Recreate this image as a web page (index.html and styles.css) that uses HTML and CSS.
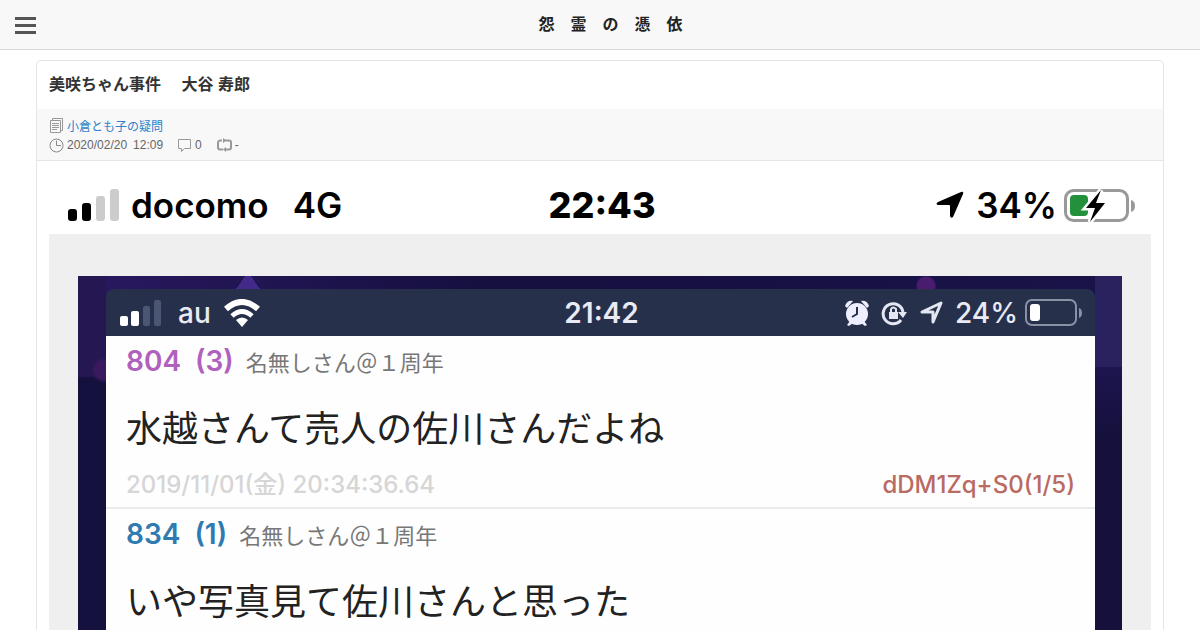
FILE: index.html
```html
<!DOCTYPE html>
<html lang="ja">

<head>
    <meta charset="UTF-8" />
    <meta name="viewport" content="width=device-width, initial-scale=1.0" />
    <title>怨　霊　の　憑　依</title>
    <link rel="stylesheet" href="styles.css">
</head>

<body>
    <header class="header">
        <button type="button" class="menu" aria-label="メニュー">
            <span></span>
            <span></span>
            <span></span>
        </button>
        <h1 class="site-title">怨　霊　の　憑　依</h1>
    </header>

    <article class="entry">
        <h2 class="entry-title">美咲ちゃん事件　 大谷 寿郎</h2>
        <div class="meta">
            <div class="meta-row">
                <svg class="icon" width="15" height="16" viewBox="0 0 15 16" fill="none" stroke="#999">
                    <path d="M3.5 3.5v-2h10v12h-2M1.500 3.500h10v12h-10z" />
                    <path d="M3 6.500h7M3 8.500h7M3 10.500h7M3 12.500h5" />
                </svg>
                <a href="#">小倉とも子の疑問</a>
            </div>
            <div class="meta-row">
                <svg class="icon" width="15" height="16" viewBox="0 0 15 16" fill="none" stroke="#888">
                    <circle cx="7.500" cy="8.500" r="6.500" />
                    <path d="M7.500 3.500v5h4.500" />
                </svg>
                <time>2020/02/20&ensp;12:09</time>
                <svg class="icon comment" width="15" height="16" viewBox="0 0 15 16" fill="none" stroke="#999">
                    <path d="M1.500 2.500h12v9h-6l-3 3v-3h-3z" />
                </svg>
                <span>0</span>
                <svg class="icon reblog" width="16" height="16" viewBox="0 0 16 16" fill="none" stroke="#999" stroke-width="2">
                    <path d="M6 3.500H4a2 2 0 0 0-2 2v5a2 2 0 0 0 2 2H7M10 12.500h3a2 2 0 0 0 2-2v-5a2 2 0 0 0-2-2H8" />
                    <path d="M7 1L10 3.500L7 6zM10 10L7 12.500L10 15z" fill="#999" stroke="none" />
                </svg>
                <span>-</span>
            </div>
        </div>

        <div class="entry-body">
            <div class="phone">
                <div class="status">
                    <div class="status-side">
                        <svg width="51" height="32" viewBox="0 0 51 32">
                            <rect x="0" y="20" width="9" height="12" rx="3" />
                            <rect x="14" y="14" width="9" height="18" rx="3" />
                            <rect x="28" y="7" width="9" height="25" rx="3" fill="#ccc" />
                            <rect x="42" y="0" width="9" height="32" rx="3" fill="#ccc" />
                        </svg>
                        <span class="carrier">docomo</span>
                        <span class="network">4G</span>
                    </div>
                    <span class="clock">22:43</span>
                    <div class="status-side right">
                        <svg width="28" height="28" viewBox="0 0 28 28">
                            <path d="M25 1Q28 0 27 3L17 26Q15 28 14 25V15Q14 14 13 14H2Q-1 13 2 11Z" />
                        </svg>
                        <span class="percent">34%</span>
                        <svg width="72" height="36" viewBox="0 0 72 36">
                            <rect x="1.500" y="3.500" width="62" height="30" rx="8" fill="none" stroke="#999" stroke-width="3" />
                            <path d="M67 13q4 1 4 6t-4 6z" fill="#999" />
                            <rect x="6" y="8" width="18" height="21" rx="4" fill="#23913b" />
                            <path d="M37 3L22 21h9l-5 14l15-19h-9z" stroke="#fff" stroke-width="5" />
                            <path d="M37 3L22 21h9l-5 14l15-19h-9z" />
                        </svg>
                    </div>
                </div>

                <div class="shot">
                    <div class="wallpaper">
                        <div class="status inner">
                            <div class="status-side">
                                <svg width="42" height="26" viewBox="0 0 42 26" fill="#fff">
                                    <rect x="0" y="16" width="8" height="10" rx="2" />
                                    <rect x="11" y="11" width="8" height="15" rx="2" />
                                    <rect x="23" y="6" width="7" height="20" rx="2" fill="#4a5673" />
                                    <rect x="34" y="0" width="7" height="26" rx="2" fill="#4a5673" />
                                </svg>
                                <span class="carrier">au</span>
                                <svg width="38" height="28" viewBox="0 0 38 28" fill="none" stroke="#fff" stroke-width="6">
                                    <path d="M3 10Q19 -4 35 10" />
                                    <path d="M9 17Q19 8 29 17" stroke-width="5" />
                                    <path d="M13 21Q19 16 25 21L19 28z" fill="#fff" stroke="none" />
                                </svg>
                            </div>
                            <span class="clock">21:42</span>
                            <div class="status-side right">
                                <svg width="24" height="26" viewBox="0 0 24 26" fill="#eef">
                                    <path d="M0 6Q2 0 8 1L2 8zM24 6Q22 0 16 1l6 7zM5 21l3 2l-4 3l-2-1zM19 21l-3 2l4 3l2-1z" />
                                    <circle cx="12" cy="14" r="11" />
                                    <path d="M12 7v7L7 17" fill="none" stroke="#26304a" stroke-width="2" />
                                </svg>
                                <svg width="26" height="26" viewBox="0 0 26 26" fill="none" stroke="#e4e6f2" stroke-width="3">
                                    <path d="M20 20A10 10 0 1 1 22 12" />
                                    <path d="M17 12h9l-4 6z" fill="#e4e6f2" stroke="none" />
                                    <path d="M8 12h9v7H8z" fill="#e4e6f2" stroke="none" />
                                    <path d="M10 13V9q2-3 5 0v4" stroke-width="2" />
                                </svg>
                                <svg width="24" height="24" viewBox="0 0 24 24" fill="none" stroke="#e4e6f2" stroke-width="3" stroke-linejoin="round">
                                    <path d="M22 2L14 21V11H3z" />
                                </svg>
                                <span class="percent">24%</span>
                                <svg width="58" height="28" viewBox="0 0 58 28">
                                    <rect x="1" y="1" width="50" height="25" rx="6" fill="none" stroke="#8b91a5" stroke-width="2" />
                                    <rect x="5" y="5" width="10" height="17" rx="3" fill="#fff" />
                                    <path d="M54 9q3 1 3 5t-3 5z" fill="#8b91a5" />
                                </svg>
                            </div>
                        </div>

                        <section class="post">
                            <div class="post-head">
                                <span class="number purple">804&ensp;(3)</span>
                                <span>名無しさん＠１周年</span>
                            </div>
                            <p class="post-text">水越さんて売人の佐川さんだよね</p>
                            <div class="post-foot">
                                <time>2019/11/01(金) 20:34:36.64</time>
                                <span class="post-id">dDM1Zq+S0(1/5)</span>
                            </div>
                        </section>
                        <section class="post">
                            <div class="post-head">
                                <span class="number blue">834&ensp;(1)</span>
                                <span>名無しさん＠１周年</span>
                            </div>
                            <p class="post-text">いや写真見て佐川さんと思った</p>
                        </section>
                    </div>
                </div>
            </div>
        </div>
    </article>
</body>

</html>
```
FILE: styles.css
```css
* {
    box-sizing: border-box;
}

body {
    margin: 0;
    background-color: white;
    color: #333;
    font-family: "Liberation Sans", "Noto Sans CJK JP", sans-serif;
    font-size: 12px;
}

.header {
    display: flex;
    align-items: center;
    height: 50px;
    padding: 0 15px;
    background-color: #f8f8f8;
    border-bottom: 1px solid #d8d8d8;
}

.menu {
    display: flex;
    flex-direction: column;
    gap: 4px;
    width: 21px;
    padding: 2px 0 0;
    border: none;
    background: none;
    cursor: pointer;
}

.menu span {
    height: 3px;
    background-color: #555;
}

.site-title {
    flex: 1;
    margin: 0;
    color: #222;
    font-size: 16px;
    line-height: 24px;
    text-align: center;
}

.entry {
    margin: 10px 3% 0;
    border: 1px solid #e5e5e5;
    border-radius: 5px;
}

.entry-title {
    margin: 0;
    padding: 12px;
    font-size: 16px;
    line-height: 24px;
}

.meta {
    padding: 6px 12px 5px;
    background-color: #f8f8f8;
    border-bottom: 1px solid #e5e5e5;
    color: #666;
}

.meta-row {
    display: flex;
    align-items: center;
    gap: 3px;
    height: 20px;
}

.meta a {
    color: #2f7fc9;
    text-decoration: none;
}

.comment,
.reblog {
    margin-left: 11px;
}

.entry-body {
    padding: 12px;
}

.phone {
    color: black;
    font-family: Inter, "Noto Sans CJK JP", sans-serif;
}

.status {
    display: flex;
    align-items: center;
    height: 61px;
    padding: 2px 15px 0 19px;
    font-size: 35px;
    font-weight: 600;
}

.status-side {
    display: flex;
    flex: 1;
    align-items: center;
    gap: 12px;
}

.right {
    justify-content: flex-end;
}

.percent {
    margin-right: -5px;
}

.network {
    margin-left: 12px;
}

.clock {
    font-size: 36px;
    font-weight: 800;
}

.shot {
    padding: 42px 29px;
    background-color: #efefef;
}

.wallpaper {
    padding: 13px 27px 0 28px;
    background:
        radial-gradient(circle at 848px 10px, #4a1c70 9px, transparent 10px),
        radial-gradient(circle at 26px 94px, #3a195f 9px, transparent 13px),
        conic-gradient(from 145deg at 170px -4px, #43298a 70deg, transparent 0) 0 0 / 100% 13px no-repeat,
        linear-gradient(#29225f 91px, #1d154f 91px, #15113c 160px) right / 27px 100% no-repeat,
        linear-gradient(#241752 100px, #15113f 102px) left / 28px 100% no-repeat,
        linear-gradient(to right, #2a1860, #15103f 40%, #191349);
}

.inner {
    height: 47px;
    padding: 0 12px 0 14px;
    border-radius: 8px 8px 0 0;
    background-color: #27304b;
    color: #e9eaf4;
    font-size: 28px;
    font-weight: 500;
}

.inner .carrier {
    margin-left: 4px;
}

.inner .clock {
    font-size: 28px;
    font-weight: 600;
}

.post {
    padding: 7px 20px 4px;
    background-color: #fefefe;
    border-bottom: 2px solid #e8eaec;
}

.post-head {
    display: flex;
    align-items: center;
    gap: 12px;
    height: 36px;
    color: #777;
    font-size: 22px;
}

.number {
    font-size: 28px;
    font-weight: 600;
}

.purple {
    color: #b060bd;
}

.blue {
    color: #2f7ab0;
}

.post-text {
    margin: 22px 0 10px;
    color: #222;
    font-size: 36px;
    line-height: 56px;
}

.post-foot {
    display: flex;
    align-items: center;
    justify-content: space-between;
    height: 36px;
    color: #d6d6d6;
    font-size: 24px;
    font-weight: 500;
    line-height: 32px;
}

.post-id {
    color: #b96a62;
}
```
